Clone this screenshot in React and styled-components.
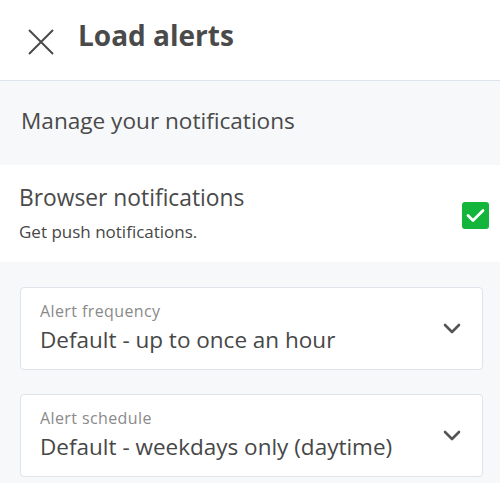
import React, { useState } from 'react';
import styled, { createGlobalStyle } from 'styled-components';

const GlobalStyle = createGlobalStyle`
  html, body {
    margin: 0;
    padding: 0;
    background: #f7f8fa;
  }
  body {
    font-family: "Open Sans", "Liberation Sans", sans-serif;
    color: #474747;
  }
`;

const selects = [
  { label: 'Alert frequency', value: 'Default - up to once an hour' },
  { label: 'Alert schedule', value: 'Default - weekdays only (daytime)' },
];

const CloseIcon = () => (
  <svg width="26" height="26" viewBox="0 0 26 26" fill="none" stroke="#4a4a4a" strokeWidth="2">
    <path d="M1 1L25 25M25 1L1 25" />
  </svg>
);

const Chevron = () => (
  <svg width="18" height="11" viewBox="0 0 18 11" fill="none" stroke="#555" strokeWidth="2.6" strokeLinecap="round" strokeLinejoin="round">
    <path d="M2 2l7 7 7-7" />
  </svg>
);

export default function App() {
  const [enabled, setEnabled] = useState(true);

  return (
    <>
      <GlobalStyle />
      <Page>
        <Header>
          <CloseButton aria-label="Close">
            <CloseIcon />
          </CloseButton>
          <Title>Load alerts</Title>
        </Header>
        <SectionTitle>Manage your notifications</SectionTitle>
        <ToggleRow>
          <ToggleText>
            <RowTitle>Browser notifications</RowTitle>
            <RowNote>Get push notifications.</RowNote>
          </ToggleText>
          <Checkbox checked={enabled} onClick={() => setEnabled(!enabled)}>
            {enabled && (
              <svg width="19" height="15" viewBox="0 0 19 15" fill="none" stroke="#fff" strokeWidth="2.8" strokeLinecap="round" strokeLinejoin="round">
                <path d="M2 7.5l5 5L17 2.5" />
              </svg>
            )}
          </Checkbox>
        </ToggleRow>
        <Selects>
          {selects.map(s => (
            <SelectBox key={s.label}>
              <SelectText>
                <SelectLabel>{s.label}</SelectLabel>
                <SelectValue>{s.value}</SelectValue>
              </SelectText>
              <Chevron />
            </SelectBox>
          ))}
        </Selects>
      </Page>
    </>
  );
}

const Page = styled.div`
  width: 500px;
  height: 483px;
  overflow: hidden;
  display: flex;
  flex-direction: column;
  background: #f7f8fa;
`;

const Header = styled.div`
  height: 80px;
  flex-shrink: 0;
  display: flex;
  align-items: center;
  gap: 24px;
  padding: 0 0 0 28px;
  background: #fff;
  border-bottom: 1px solid #dde4ec;
`;

const CloseButton = styled.button`
  border: 0;
  padding: 0;
  background: none;
  display: flex;
  margin-top: 3px;
`;

const Title = styled.h1`
  margin: 0 0 11px;
  font-size: 28px;
  font-weight: 700;
  color: #4a4a4a;
`;

const SectionTitle = styled.div`
  height: 84px;
  flex-shrink: 0;
  box-sizing: border-box;
  padding: 24px 21px 0;
  font-size: 22.6px;
  color: #4a4a4a;
`;

const ToggleRow = styled.div`
  height: 97px;
  flex-shrink: 0;
  box-sizing: border-box;
  background: #fff;
  display: flex;
  align-items: center;
  justify-content: space-between;
  padding: 0 11px 0 19px;
`;

const ToggleText = styled.div`
  display: flex;
  flex-direction: column;
  gap: 7px;
  margin-top: -3px;
`;

const RowTitle = styled.div`
  font-size: 22.8px;
  color: #4a4a4a;
`;

const RowNote = styled.div`
  font-size: 17px;
  color: #474747;
`;

const Checkbox = styled.div`
  width: 27px;
  height: 27px;
  border-radius: 3px;
  margin-top: 4px;
  background: ${p => (p.checked ? '#13b53a' : '#fff')};
  border: ${p => (p.checked ? 'none' : '2px solid #bbb')};
  display: flex;
  align-items: center;
  justify-content: center;
  cursor: pointer;
`;

const Selects = styled.div`
  display: flex;
  flex-direction: column;
  gap: 24px;
  padding: 25px 17px 0 20px;
`;

const SelectBox = styled.div`
  height: 83px;
  box-sizing: border-box;
  background: #fff;
  border: 1px solid #dfe4ea;
  border-radius: 4px;
  display: flex;
  align-items: center;
  justify-content: space-between;
  padding: 0 21px 0 19px;
`;

const SelectText = styled.div`
  display: flex;
  flex-direction: column;
  gap: 2px;
  margin-top: -3px;
`;

const SelectLabel = styled.div`
  font-size: 16px;
  letter-spacing: 0.4px;
  color: #8a8a8a;
`;

const SelectValue = styled.div`
  font-size: 22.5px;
  color: #474747;
`;
